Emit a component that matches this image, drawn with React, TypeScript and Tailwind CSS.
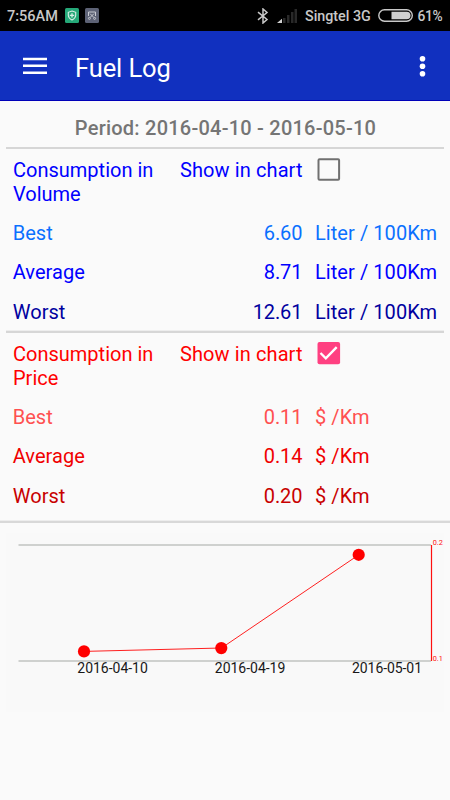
import React from "react";

type Row = { label: string; value: string; unit: string; color: string };

const volume: Row[] = [
  { label: "Best", value: "6.60", unit: "Liter / 100Km", color: "text-[#0a70ff]" },
  { label: "Average", value: "8.71", unit: "Liter / 100Km", color: "text-[#0000ff]" },
  { label: "Worst", value: "12.61", unit: "Liter / 100Km", color: "text-[#0000a0]" },
];

const price: Row[] = [
  { label: "Best", value: "0.11", unit: "$ /Km", color: "text-[#ff5050]" },
  { label: "Average", value: "0.14", unit: "$ /Km", color: "text-[#f00000]" },
  { label: "Worst", value: "0.20", unit: "$ /Km", color: "text-[#c80000]" },
];

function StatusBar() {
  return (
    <div className="flex h-[31px] shrink-0 items-center bg-black text-[#c8c8c8]">
      <span className="ml-[7px] w-[58px] pt-[2px] text-[14.5px] font-medium">7:56AM</span>
      <svg className="h-[15px] w-[14px]" viewBox="0 0 14 15">
        <rect width="14" height="15" rx="1.5" fill="#25a878" />
        <path d="M7 3 L10.7 4.3 V7.5 Q10.4 10.4 7 12 Q3.6 10.4 3.3 7.5 V4.3Z" fill="none" stroke="#d8eee6" strokeWidth="1.1" />
        <path d="M7 5.2v4.4M4.8 7.4h4.4" stroke="#d8eee6" strokeWidth="1.3" />
      </svg>
      <svg className="ml-[6px] h-[15px] w-[14px]" viewBox="0 0 14 15">
        <rect width="14" height="15" rx="1.5" fill="#5d6275" />
        <path d="M3.5 8V4h7v4M5 5.6l4 4M9 5.6l-4 4" fill="none" stroke="#c7c9d0" strokeWidth="1" />
        <circle cx="4.4" cy="10.4" r="1" fill="none" stroke="#c7c9d0" strokeWidth="0.9" />
        <circle cx="9.6" cy="10.4" r="1" fill="none" stroke="#c7c9d0" strokeWidth="0.9" />
      </svg>
      <svg className="ml-[158px] h-[16px] w-[12px]" viewBox="0 0 12 16" fill="none" stroke="#c8c8c8" strokeWidth="1.5">
        <path d="M1 4.2 10 11.5 6 15V1l4 3.5L1 11.8" />
      </svg>
      <svg className="ml-[8px] h-[14px] w-[21px]" viewBox="0 0 21 14">
        <path d="M0 14 5 9.8V14Z" fill="#d0d0d0" />
        <path d="M6 9h2.5v5H6zM10 6h2.5v8H10zM14 3h2.5v11H14zM17.5 0H20v14h-2.5z" fill="#292929" />
      </svg>
      <span className="ml-[7px] w-[73px] whitespace-nowrap pt-[2px] text-[14.3px] font-medium">Singtel 3G</span>
      <svg className="h-[13px] w-[36px]" viewBox="0 0 36 13">
        <rect x="0.8" y="0.8" width="33.5" height="11.4" rx="5.7" fill="none" stroke="#c8c8c8" strokeWidth="1.4" />
        <path d="M13.5 2.7h15.2a3.8 3.8 0 0 1 0 7.6H13.5z" fill="#d0d0d0" />
      </svg>
      <span className="ml-[3.5px] pt-[2px] text-[13.8px] font-medium tracking-[-0.4px]">61%</span>
    </div>
  );
}

function Header() {
  return (
    <header className="flex h-[70px] shrink-0 items-center border-b border-[#0000b8] bg-[#1130bf] text-white">
      <svg className="ml-[23px] h-[18px] w-[24px]" viewBox="0 0 24 18" fill="white">
        <path d="M0 .7h24v2.5H0zM0 7.5h24v2.5H0zM0 14.4h24v2.5H0z" />
      </svg>
      <h1 className="ml-[28px] mt-[6px] flex-1 text-[25.5px] leading-none tracking-[-0.1px]">Fuel Log</h1>
      <svg className="mr-[24px] h-[22px] w-[7px]" viewBox="0 0 7 22" fill="white">
        <circle cx="3.5" cy="3.7" r="2.8" />
        <circle cx="3.5" cy="11.2" r="2.8" />
        <circle cx="3.5" cy="18.7" r="2.8" />
      </svg>
    </header>
  );
}

function Check({ on }: { on: boolean }) {
  return on ? (
    <svg className="mt-[9px] ml-[14px] h-[24px] w-[24px] shrink-0" viewBox="0 0 24 24">
      <rect x="0.5" y="0" width="22.6" height="22.3" rx="2" fill="#ff4081" />
      <path d="m3.5 11 5.3 5.3L19.7 5.2" fill="none" stroke="white" strokeWidth="2.4" />
    </svg>
  ) : (
    <svg className="mt-[9px] ml-[14px] h-[24px] w-[24px] shrink-0" viewBox="0 0 24 24">
      <rect x="1.5" y="1.3" width="20.6" height="20.4" rx="1" fill="none" stroke="#707070" strokeWidth="2" />
    </svg>
  );
}

function Section({ kind, color, on, rows }: { kind: string; color: string; on: boolean; rows: Row[] }) {
  return (
    <section className="h-[181px] shrink-0 text-[20px] leading-[24px]">
      <div className={`flex h-[64.4px] ${color}`}>
        <div className="ml-[13px] w-[167px] pt-[9px]">
          Consumption in
          <br />
          {kind}
        </div>
        <div className="w-[123px] whitespace-nowrap pt-[9px] tracking-[0.1px]">Show in chart</div>
        <Check on={on} />
      </div>
      {rows.map((r) => (
        <div key={r.label} className={`flex h-[39.3px] items-center ${r.color}`}>
          <span className="ml-[12.7px] w-[140px] tracking-[0.05px]">{r.label}</span>
          <span className="w-[149.7px] text-right tracking-[-0.1px]">{r.value}</span>
          <span className="ml-[12.6px] whitespace-nowrap tracking-[0.07px]">{r.unit}</span>
        </div>
      ))}
    </section>
  );
}

function Chart() {
  return (
    <svg className="ml-[6px] h-[190px] w-[438px] shrink-0" viewBox="6 523 438 190">
      <rect x="6" y="533" width="438" height="179" fill="#f9f9f9" />
      <path d="M18.5 545H431M18.5 661H431" stroke="#cfd1cf" strokeWidth="1.8" />
      <path d="M431.5 545V661" stroke="#ff1010" strokeWidth="1.2" />
      <path d="M84 651.4 221.5 648 358.8 554.8" fill="none" stroke="#ff2020" strokeWidth="1" />
      <g fill="#ff0000">
        <circle cx="84" cy="651.4" r="6.1" />
        <circle cx="221.3" cy="648.1" r="6.1" />
        <circle cx="358.7" cy="554.8" r="6.1" />
      </g>
      <g fontSize="14" fill="#181818">
        <text x="77.3" y="673.4" textLength="70.5">2016-04-10</text>
        <text x="214.8" y="673.4" textLength="70.5">2016-04-19</text>
        <text x="352" y="673.4" textLength="70">2016-05-01</text>
      </g>
      <g fontSize="7.3" fill="#ff1010">
        <text x="432.7" y="545" textLength="10.2">0.2</text>
        <text x="432.7" y="661" textLength="10.2">0.1</text>
      </g>
    </svg>
  );
}

export default function App() {
  return (
    <main className="flex h-[800px] w-[450px] flex-col overflow-hidden bg-[#fafafa] font-[Roboto,sans-serif]">
      <StatusBar />
      <Header />
      <div className="h-[46px] shrink-0 pl-[1px] pt-[15px] text-center text-[20px] font-medium leading-[24px] tracking-[0.23px] text-[#757575]">
        Period: 2016-04-10 - 2016-05-10
      </div>
      <div className="ml-[6px] h-[2px] w-[438px] shrink-0 bg-[#d6d6d6]" />
      <Section kind="Volume" color="text-[#0000ff]" on={false} rows={volume} />
      <div className="ml-[6px] h-[3px] w-[438px] shrink-0 border-t border-[#ededed] bg-[#d6d6d6]" />
      <Section kind="Price" color="text-[#ff0000]" on={true} rows={price} />
      <div className="mt-[6px] h-[3px] shrink-0 border-t border-[#ededed] bg-[#d8d8d8]" />
      <Chart />
    </main>
  );
}
